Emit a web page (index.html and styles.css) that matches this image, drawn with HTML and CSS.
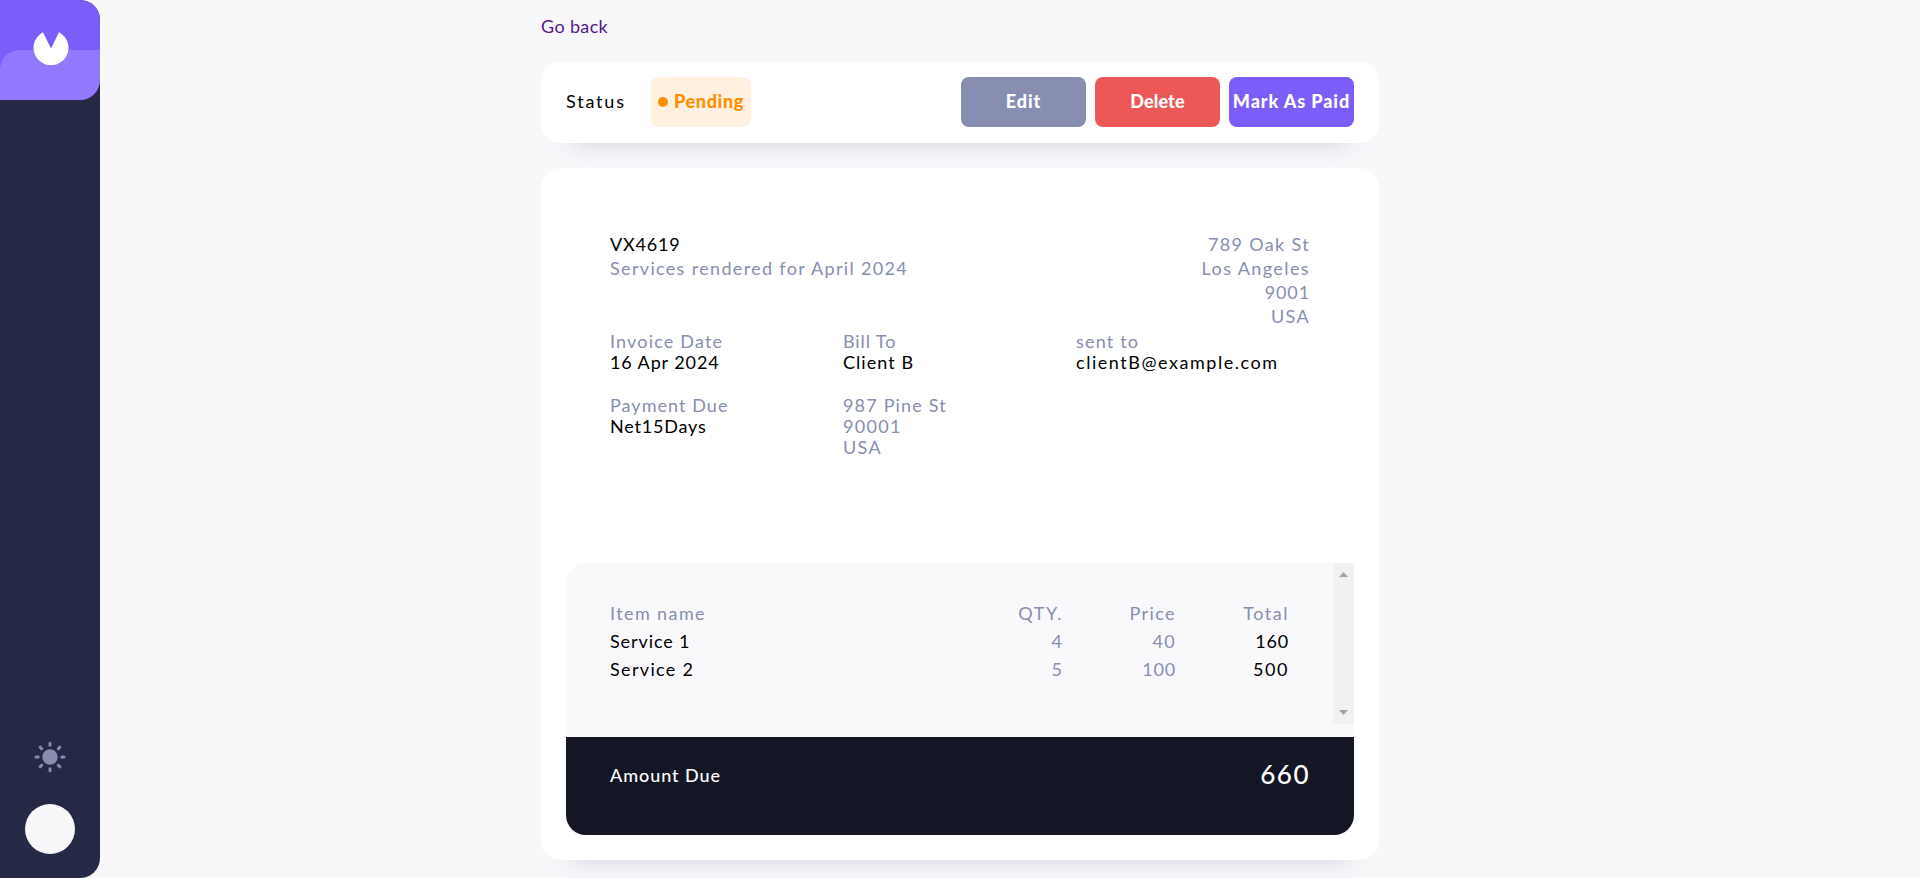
FILE: index.html
```html
<!DOCTYPE html>
<html lang="en">
<head>
<meta charset="utf-8">
<title>Invoice VX4619</title>
<link rel="stylesheet" href="styles.css">
</head>
<body>
<div class="app">
  <aside class="sidebar">
    <div class="brand">
      <svg class="brand-mark" viewBox="0 0 36 34" width="36" height="34"><path d="M10 1.2 18 17.5 26 1.2A17.5 17.5 0 1 1 10 1.2Z" fill="#fff"/></svg>
    </div>
    <div class="sidebar-bottom">
      <svg class="sun" viewBox="-16 -16 32 32" width="32" height="32"><circle r="7.7" fill="#888eb0"/><path d="M0-13.8v2M0 11.8v2M-14 0h2.2M11.8 0H14M-9.8-9.8l1.5 1.5M8.3 8.3l1.5 1.5M9.8-9.8 8.3-8.3M-8.3 8.3l-1.5 1.5" stroke="#888eb0" stroke-width="3" stroke-linecap="round"/></svg>
      <div class="avatar"></div>
    </div>
  </aside>
  <main class="page">
    <a class="back" href="#">Go back</a>
    <section class="card status-bar">
      <span class="status-label">Status</span>
      <span class="badge"><i class="dot"></i><span>Pending</span></span>
      <div class="actions">
        <button class="btn edit">Edit</button>
        <button class="btn delete">Delete</button>
        <button class="btn paid">Mark As Paid</button>
      </div>
    </section>
    <section class="card invoice">
      <div class="details">
        <div class="head">
          <div class="lines"><span class="strong tight">VX4619</span><span class="wide">Services rendered for April 2024</span></div>
          <div class="lines right"><span class="wide">789 Oak St</span><span class="wider">Los Angeles</span><span class="snug">9001</span><span class="wide">USA</span></div>
        </div>
        <div class="grid">
          <div class="cell"><span class="mid">Invoice Date</span><span class="strong snug">16 Apr 2024</span></div>
          <div class="cell"><span class="snug">Bill To</span><span class="strong">Client B</span></div>
          <div class="cell"><span class="mid">sent to</span><span class="strong widest">clientB@example.com</span></div>
          <div class="cell"><span>Payment Due</span><span class="strong tight">Net15Days</span></div>
          <div class="cell"><span class="mid">987 Pine St</span><span class="wide">90001</span><span class="wide">USA</span></div>
        </div>
      </div>
      <div class="items">
        <div class="items-scroll">
          <div class="table">
            <span class="wider">Item name</span><span class="num widest">QTY.</span><span class="num wider">Price</span><span class="num widest">Total</span>
            <span class="strong snug">Service 1</span><span class="num">4</span><span class="num wide">40</span><span class="num strong tight">160</span>
            <span class="strong wide">Service 2</span><span class="num">5</span><span class="num tight">100</span><span class="num strong widest">500</span>
          </div>
          <div class="scrollbar">
            <svg viewBox="0 0 9 5" width="9" height="5"><path d="M0 5 4.5 0 9 5Z" fill="#a3a3a3"/></svg>
            <svg viewBox="0 0 9 5" width="9" height="5"><path d="M0 0 4.5 5 9 0Z" fill="#a3a3a3"/></svg>
          </div>
        </div>
        <div class="total"><span class="total-label">Amount Due</span><span class="total-value">660</span></div>
      </div>
    </section>
  </main>
</div>
</body>
</html>
```
FILE: styles.css
```css
* { box-sizing: border-box; }
body { margin: 0; background: #f8f8fb; font-family: Lato, sans-serif; font-size: 18px; color: #888eb0; }
.app { display: flex; height: 878px; overflow: hidden; }
.sidebar { width: 100px; background: #252945; border-radius: 0 20px 20px 0; display: flex; flex-direction: column; justify-content: space-between; flex: none; }
.brand { height: 100px; border-radius: 0 20px 20px 0; background: #7c5dfa; display: grid; place-items: center; padding: 0 0 4px 1px; position: relative; overflow: hidden; }
.brand::before { content: ""; position: absolute; left: 0; right: 0; bottom: 0; height: 50px; background: #9277ff; border-radius: 20px 0 20px 0; }
.brand-mark { position: relative; }
.sidebar-bottom { display: flex; flex-direction: column; align-items: center; gap: 31px; padding-bottom: 24px; }
.avatar { width: 50px; height: 50px; border-radius: 50%; background: #f8f8fb; }
.page { width: 838px; margin-left: 441px; flex: none; }
.back { display: block; height: 62px; padding-top: 15px; line-height: 22px; letter-spacing: .35px; color: #551a8b; text-decoration: none; }
.card { background: #fff; border-radius: 20px; box-shadow: 0 29px 25px -29px rgba(50, 50, 93, .2); }
.status-bar { height: 81px; padding: 15px 25px 16px; display: flex; align-items: center; color: #000; }
.status-label { width: 85px; padding-bottom: 2px; letter-spacing: 1.8px; }
.badge { width: 100px; height: 50px; border-radius: 8px; background: #fff0e0; color: #ff8f00; font-weight: 900; letter-spacing: .65px; display: flex; align-items: center; justify-content: center; gap: 6px; }
.badge span { padding-bottom: 2px; }
.dot { width: 10px; height: 10px; border-radius: 50%; background: currentColor; }
.actions { display: flex; gap: 9px; margin-left: auto; }
.btn { width: 125px; height: 50px; padding: 0 0 2px; border: 0; border-radius: 8px; color: #fff; font: 900 18px Lato, sans-serif; white-space: nowrap; }
.edit { background: #888eb0; letter-spacing: .9px; }
.delete { background: #ec5757; letter-spacing: .1px; }
.paid { background: #7c5dfa; letter-spacing: .9px; }
.strong { color: #000; }
.tight { letter-spacing: .8px; }
.snug { letter-spacing: .9px; }
.mid { letter-spacing: 1.18px; }
.wide { letter-spacing: 1.33px; }
.wider { letter-spacing: 1.4px; }
.widest { letter-spacing: 1.54px; }
.invoice { height: 692px; margin-top: 25px; padding: 25px; display: flex; flex-direction: column; justify-content: space-between; }
.details { padding: 39px 44px 0; letter-spacing: 1.05px; }
.head { display: flex; justify-content: space-between; height: 99px; line-height: 24px; }
.lines, .cell { display: flex; flex-direction: column; align-items: flex-start; }
.right { align-items: flex-end; }
.grid { display: grid; grid-template-columns: repeat(3, 233px); row-gap: 22px; line-height: 21px; }
.items { height: 272px; border-radius: 20px 0 20px 20px; overflow: hidden; background: #f9f9fc; }
.items-scroll { height: 161px; display: flex; margin-bottom: 13px; }
.table { flex: 1; display: grid; grid-template-columns: 1fr 113px 113px 113px; grid-auto-rows: 28px; line-height: 28px; letter-spacing: 1px; padding: 36px 44px 0 44px; }
.num { text-align: right; }
.scrollbar { width: 21px; background: #f1f1f1; display: flex; flex-direction: column; align-items: center; justify-content: space-between; padding: 9px 0; }
.total { height: 98px; padding: 0 44px; background: #141625; color: #fff; display: flex; justify-content: space-between; line-height: 77px; }
.total-label { font-weight: 500; letter-spacing: .95px; }
.total-value { font-size: 26px; font-weight: 500; line-height: 75px; letter-spacing: 1.5px; }
```
